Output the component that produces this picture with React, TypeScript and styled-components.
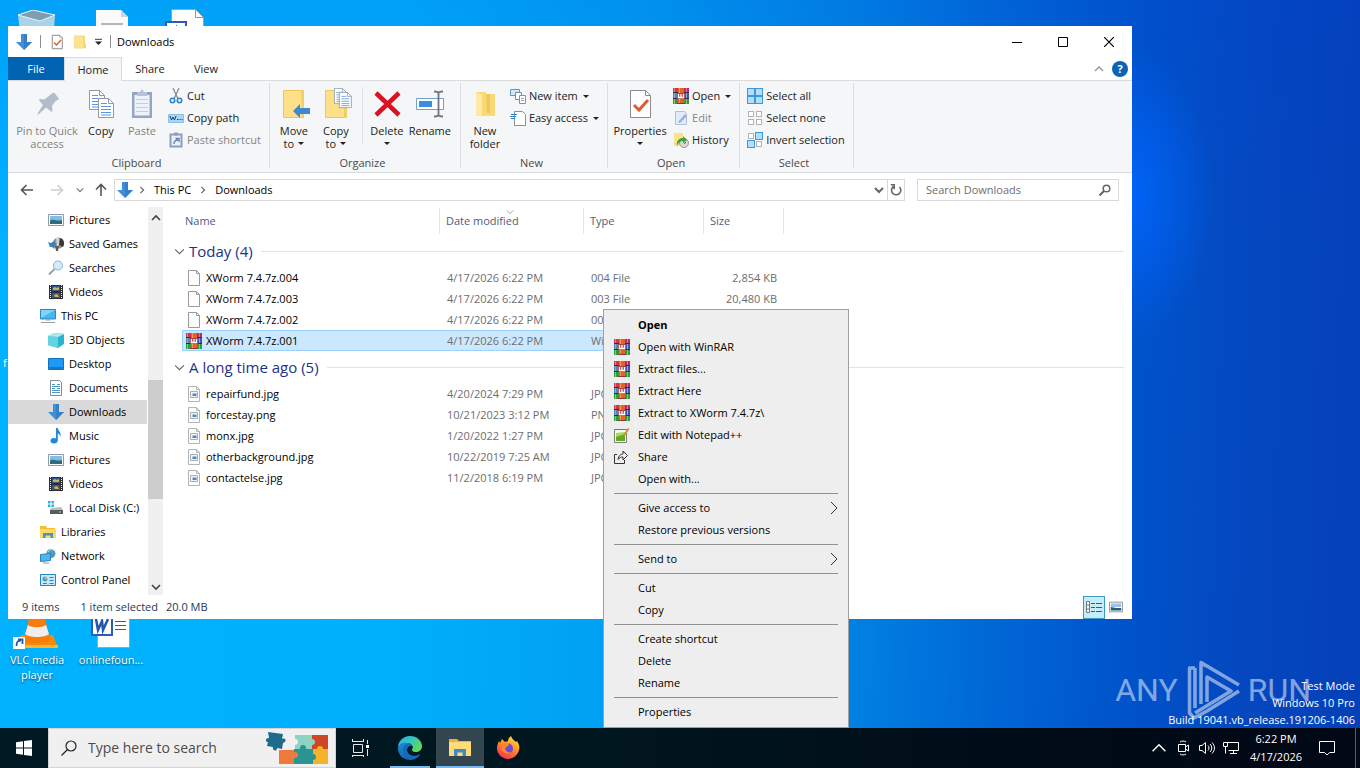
import React from 'react';
import styled, { createGlobalStyle, css } from 'styled-components';

const Global = createGlobalStyle`
  *, *::before, *::after { box-sizing: border-box; }
  body { margin: 0; overflow: hidden; }
  body, button, input, table { font-family: "Open Sans", "Noto Sans", sans-serif; font-size: 11px; line-height: 16px; }
  button { border: 0; padding: 0; margin: 0; background: none; color: inherit; cursor: default; }
  svg { display: block; flex: none; }
`;

/* ---------- Icons ---------- */

type IconProps = { size?: number };

const Svg = ({ s = 16, box = 16, children }: { s?: number; box?: number; children: React.ReactNode }) => (
  <svg width={s} height={s} viewBox={`0 0 ${box} ${box}`} fill="none" aria-hidden="true">{children}</svg>
);

const RarIcon = () => (
  <Svg>
    <path d="M0 0h16v5H0z" fill="#c93a4c" /><path d="M10 0h6v5h-6z" fill="#b02f63" />
    <path d="M0 5h16v6H0z" fill="#4b4fae" /><path d="M0 5h6v6H0z" fill="#4f86b8" />
    <path d="M0 11h16v5H0z" fill="#2f9a3e" />
    <path d="M0 4h16v1H0zM0 10h16v1H0z" fill="#4a2038" />
    <path d="M1 0h1v4H1zM13 0h1v4h-1z" fill="#eb7686" />
    <path d="M1 5h1v5H1zM13 5h1v5h-1z" fill="#8ba6dc" />
    <path d="M1 11h1v5H1zM13 11h1v5h-1z" fill="#7acb7a" />
    <path d="M5 0h6v16H5z" fill="#e3622b" /><path d="M6 0h1v16H6z" fill="#f39a50" />
    <path d="M4 5h8v6H4z" fill="#a94446" /><path d="M5.500 6v3.500h5V6M8 6v3" stroke="#fff" strokeWidth="1.300" />
    <path d="M4 15h8v1H4z" fill="#93362a" />
  </Svg>
);

const DownIcon = ({ size = 16 }: IconProps) => (
  <Svg s={size}><path d="M5 0h6v8h5l-8 8-8-8h5z" fill="#3f8fd9" /><path d="M8 0h3v8h5l-8 8z" fill="#3580c8" /></Svg>
);

const Folder = ({ size = 16 }: IconProps) => (
  <Svg s={size} box={32}>
    <path d="M3 2h22v28H3z" fill="#ffe490" stroke="#e9c55e" /><path d="M25 20h4v10h-4z" fill="#f0c750" /><path d="M23 2h4v28h-2z" fill="#f7d26b" />
  </Svg>
);

const CheckPage = ({ size = 32 }: IconProps) => (
  <Svg s={size} box={32}>
    <path d="M6.500 2.500h15l5 5v22h-20z" fill="#fff" stroke="#8c8c8c" strokeWidth={size < 20 ? 2 : 1} /><path d="M21.500 2.500v5h5" stroke="#8c8c8c" />
    <path d="M10 17l5 5 9-10" stroke="#de5f2e" strokeWidth="3" />
  </Svg>
);

const PinIcon = () => (
  <Svg s={32} box={32}><path d="M16.500 9l5-4c.500-.500 1.500-.500 2 0l4 5c.500.500.500 1.500-.500 2l-2 .500-4 5.500.500 4.500c0 1-1 1.500-1.800.800L15 19.500 8 26l-1.500.800.300-1.800L12 17 8.500 13c-.800-.800-.300-2 .800-2l4.200.500z" fill="#b3bccb" /></Svg>
);

const Sheet = ({ x, y }: { x: number; y: number }) => (
  <g transform={`translate(${x} ${y})`}>
    <path d="M.500.500h10l5 5v14H.500z" fill="#fff" stroke="#8d98a8" /><path d="M10.500.500v5h5" stroke="#8d98a8" />
    <path d="M3 5.500h6M3 8.500h10M3 11.500h10M3 14.500h10M3 17h10" stroke="#5c96dd" />
  </g>
);

const CopyIcon = () => <Svg s={32} box={32}><Sheet x={4} y={2} /><Sheet x={13} y={10} /></Svg>;

const PasteIcon = () => (
  <Svg s={32} box={32}>
    <path d="M6 4h20v26H6z" fill="#96a5c4" /><path d="M8.500 7h15v20.500h-15z" fill="#eef2fa" />
    <path d="M11 4h3l2-3 2 3h3v4H11z" fill="#b7c2d8" /><path d="M10 11.500h12M10 15.500h12M10 19.500h12M10 23.500h12" stroke="#c3cee2" />
  </Svg>
);

const CutIcon = () => (
  <Svg><path d="M5 0l5 11M11 0L6 11" stroke="#7b8796" strokeWidth="1.200" /><circle cx="4.500" cy="12.500" r="2.200" stroke="#2d86c6" strokeWidth="1.600" /><circle cx="11.500" cy="12.500" r="2.200" stroke="#2d86c6" strokeWidth="1.600" /></Svg>
);

const PathIcon = () => (
  <Svg><path d="M.500 4.500h15v8H.500z" fill="#a9d6f5" stroke="#8ac0e6" /><path d="M2 6l1.500 4L5 7l1.500 3L8 6M9 9.500h1.500M11.500 9.500h1M13.500 9.500h1" stroke="#1c3f66" /></Svg>
);

const PasteShortcutIcon = () => (
  <Svg><path d="M2.500 2.500h11v12h-11z" fill="#eaf0fa" stroke="#8d9dbf" strokeWidth="2" /><path d="M6 .500h4v3H6z" fill="#8d9dbf" /><path d="M6 12c0-3 1-4 4-4M7.500 6.500h3.500V10" stroke="#6680b4" strokeWidth="1.400" /></Svg>
);

const MoveToIcon = () => (
  <Svg s={32} box={32}><path d="M5.500 2.500h19v27h-19z" fill="#ffe08a" stroke="#ecc65d" /><path d="M23 2h3v28h-2z" fill="#f3cd66" /><path d="M15 23l7-7v4h10v6H22v4z" fill="#3d8ad2" /></Svg>
);

const CopyToIcon = () => (
  <Svg s={32} box={32}><path d="M5.500 2.500h19v27h-19z" fill="#ffe08a" stroke="#ecc65d" /><path d="M24 19h3v11h-3z" fill="#f3cd66" />
    <g transform="translate(14 0) scale(.8)"><Sheet x={0} y={0} /></g><g transform="translate(19 4) scale(.8)"><Sheet x={0} y={0} /></g></Svg>
);

const DeleteIcon = () => <Svg s={32} box={32}><path d="M5 5l23 22M28 5L5 27" stroke="#d81324" strokeWidth="4.500" /></Svg>;

const RenameIcon = () => (
  <Svg s={32} box={32}><path d="M2.500 10.500h27v11h-27z" fill="#fff" stroke="#6aa2d4" /><path d="M5 13h13v6H5z" fill="#3b8de0" /><path d="M20 3.500c3 0 4.500.500 4.500 2v21c0 1.500-1.500 2-4.500 2M29 3.500c-3 0-4.500.500-4.500 2v21c0 1.500 1.500 2 4.500 2" stroke="#6d7680" strokeWidth="1.800" /></Svg>
);

const NewFolderIcon = () => (
  <Svg s={32} box={32}><path d="M7 4h10v2h9v22H7z" fill="#f9d876" /><path d="M7 4l6 3v22l-6-2z" fill="#ffe9a8" /><path d="M17 6h4v19h-3z" fill="#f2c75a" /></Svg>
);

const NewItemIcon = () => (
  <Svg><path d="M.500 1.500h9v6h-9z" fill="#cfe9f9" stroke="#5d9cb9" /><path d="M5.500 4.500h6v7h-6z" fill="#fff" stroke="#6f8ea8" /><path d="M9.500 7.500h6v8h-6z" fill="#fff" stroke="#8d9096" /><path d="M11 10.500h3M11 12.500h3" stroke="#8ba9c8" /></Svg>
);

const EasyAccessIcon = () => (
  <Svg><path d="M4.500 1.500h8l3 3v11h-11z" fill="#fff" stroke="#8d9096" /><path d="M1 4.500h6M0 6.500h6M1 8.500h4" stroke="#2b83cf" /></Svg>
);

const EditIcon = () => (
  <Svg><path d="M2.500 1.500h9l2 2v11h-11z" fill="#e2ebfa" stroke="#b1bfdb" /><path d="M5 12l7-8 2 2-7 7z" fill="#9db1d8" /></Svg>
);

const HistoryIcon = () => (
  <Svg><path d="M1 1h9v13H1z" fill="#ffe08a" /><circle cx="11" cy="11" r="4.500" fill="#d7d7d7" stroke="#9a9a9a" /><path d="M4 14c-1-5 2-8 6-8V4l4 4-4 3V9c-3 0-5 2-6 5z" fill="#41a336" /><path d="M11 12l2-2" stroke="#555" /></Svg>
);

const Squares = ({ on }: { on: boolean[] }) => (
  <Svg>{on.map((f, i) => <rect key={i} x={(i % 2) * 8 + (f ? .5 : 1.5)} y={Math.floor(i / 2) * 8 + (f ? .5 : 1.5)} width={f ? 7 : 5} height={f ? 7 : 5} fill={f ? '#b5defb' : '#fff'} stroke={f ? '#3f97dd' : '#b3b3b3'} />)}</Svg>
);

const PictureIcon = () => (
  <Svg><path d="M.500 2.500h15v11H.500z" fill="#fff" stroke="#8f9ba6" /><path d="M2 4h12v5H2z" fill="#7fbdf0" /><path d="M2 9c3-3 6 1 12-1v4H2z" fill="#2f6e74" /></Svg>
);
const GamesIcon = () => (
  <Svg><circle cx="10.500" cy="7" r="5.500" fill="#8c9499" /><path d="M8 2l3 0 1 6-3 3z" fill="#cfd3d6" /><path d="M12 2c4 1 5 6 3 9l-4-2z" fill="#3a3635" /><path d="M0 6l3 1 3-2 2 3-2 5-2-2-2 0z" fill="#3f83b5" /><path d="M7 10h4l-1 5H8z" fill="#635954" /></Svg>
);
const SearchesIcon = () => (
  <Svg><circle cx="10" cy="5.500" r="4.500" fill="#d3ebfa" stroke="#8ab2cf" /><path d="M6.500 9L1 14.500" stroke="#9aa0a5" strokeWidth="2" /></Svg>
);
const VideoIcon = () => (
  <Svg><path d="M1 1h14v14H1z" fill="#2e2e35" /><path d="M2.500 1v14M13.500 1v14" stroke="#e7e7e7" strokeDasharray="1 1" /><path d="M4 2h8v5H4z" fill="#33598e" /><path d="M4 9h8v5H4z" fill="#3b5588" /><path d="M5 4l2-1 2 1 2-1v3H5zM6 11l3-1 2 3H7z" fill="#cfae53" /></Svg>
);
const PcIcon = () => (
  <Svg><path d="M.500 1.500h15v9.500H.500z" fill="#45b6f0" stroke="#3387b5" /><path d="M1 2h14L1 10z" fill="#7dd4fa" /><path d="M6 12h4M1 14.500h14" stroke="#92a0aa" /></Svg>
);
const CubeIcon = () => (
  <Svg><path d="M0 4l6-3 10 1v10l-6 4L0 13z" fill="#2bb5cd" /><path d="M0 4l10 1v11L0 13z" fill="#63d3e3" /><path d="M0 4l6-3 10 1-6 3z" fill="#a6ecf3" /></Svg>
);
const DesktopIcon = () => (
  <Svg><path d="M.500 2.500h15v11H.500z" fill="#1c9af5" stroke="#1471bd" /><path d="M1 12h14" stroke="#0d5ca3" /></Svg>
);
const DocIcon = () => (
  <Svg><path d="M2.500.500h9l2 2v13h-11z" fill="#fff" stroke="#84909b" /><path d="M4 4.500h3M9 4.500h3M4 6.500h8M4 8.500h3M9 8.500h3M4 10.500h8M4 12.500h8" stroke="#4d95c4" /></Svg>
);
const MusicIcon = () => (
  <Svg><ellipse cx="6" cy="12.800" rx="3.500" ry="2.700" fill="#1e88dd" /><path d="M8 0h1.800c0 3 4.200 4 2.400 9-.200-2.500-1.200-3.300-2.400-3.500v7.500H8z" fill="#1e88dd" /></Svg>
);
const DiskIcon = () => (
  <Svg><path d="M0 1h2.500v2.500H0zM3.500 1H6v2.500H3.500zM0 4.500h2.500V7H0zM3.500 4.500H6V7H3.500z" fill="#2eb1df" /><path d="M3 8l10-1 2 3H2z" fill="#b9bec2" /><path d="M2 10h13v4H2z" fill="#555b5f" /><path d="M11 12h2" stroke="#7ee07a" /></Svg>
);
const LibraryIcon = () => (
  <Svg><path d="M0 2h6l1 2h8v10H0z" fill="#f6bd31" /><path d="M0 5h16v9H0z" fill="#ffd965" /><path d="M3 14V9h10v5h-2.500v-2.500h-5V14z" fill="#4293cf" /></Svg>
);
const NetworkIcon = () => (
  <Svg><circle cx="11" cy="5.500" r="4.500" fill="#5699bd" /><path d="M8 4c2-3 5-3 6-1" stroke="#bde2f1" /><path d="M.500 6.500l10-1v7l-10 1z" fill="#4cb7ee" stroke="#2c83bb" /><path d="M3 15h6" stroke="#8d9ba5" /></Svg>
);
const ControlIcon = () => (
  <Svg><path d="M.500 2.500h15v11H.500z" fill="#c4eafa" stroke="#2785ba" /><circle cx="5" cy="7" r="2.500" fill="#3f9fda" /><path d="M5 7V4.500A2.500 2.500 0 017.500 7z" fill="#f0b33c" /><path d="M9.500 5.500h4M9.500 8.500h4M3 11.500h4M9.500 11.500h4" stroke="#2785ba" /></Svg>
);
const PageIcon = () => (
  <Svg><path d="M2.500.500h8l3 3v12h-11z" fill="#fdfdfd" stroke="#9a9a9a" /><path d="M10.500.500v3h3" stroke="#9a9a9a" /></Svg>
);
const ImagePageIcon = () => (
  <Svg><path d="M2.500.500h8l3 3v12h-11z" fill="#fdfdfd" stroke="#b4b4b4" /><path d="M10.500.500v3h3" stroke="#b4b4b4" /><path d="M4.500 5.500h7v6h-7z" fill="#eef5fa" stroke="#9fb0be" /><path d="M6.500 7.500h4v2.500h-4z" fill="#5c86a8" /></Svg>
);
const NppIcon = () => (
  <Svg><path d="M.500 2.500h12v13H.500z" fill="#f5f9ee" stroke="#7d8277" /><path d="M2 6l9-1v9H2z" fill="#a8d95b" /><path d="M2 10l9-3v7H2z" fill="#62a825" /><path d="M1 2.500h11" stroke="#666" strokeDasharray="1 1" /><path d="M9 8l5-7 1.500 1L11 9z" fill="#d5903a" /></Svg>
);
const ShareIcon = () => (
  <Svg><path d="M3 5.500H.500v9h10V11" stroke="#333" /><path d="M4 10.500C4.500 6.500 7 5 9 5V2L13.500 6.500 9 11V8C7 8 5.500 8.500 4 10.500z" stroke="#333" strokeLinejoin="round" /></Svg>
);

const Chevron = ({ dir, w = 8, color = '#666', bold = 1.5 }: { dir: 'up' | 'down' | 'right'; w?: number; color?: string; bold?: number }) => {
  const d = { up: 'M1 7l4-4 4 4', down: 'M1 3l4 4 4-4', right: 'M3 1l4 4-4 4' }[dir];
  return <svg width={w} height={w} viewBox="0 0 10 10" fill="none" aria-hidden="true"><path d={d} stroke={color} strokeWidth={bold} /></svg>;
};

const SubmenuMark = () => (
  <Svg><path d="M5 2l6 6-6 6" stroke="#333" /></Svg>
);

const Arrow = ({ deg, color }: { deg: number; color: string }) => (
  <Svg><path transform={`rotate(${deg} 8 8)`} d="M14 8H3M7.500 3L2.500 8l5 5" stroke={color} strokeWidth="1.600" /></Svg>
);

const Caret = () => <svg width="6" height="3" viewBox="0 0 6 3" aria-hidden="true"><path d="M0 0h6L3 3z" fill="#222" /></svg>;

/* ---------- Desktop ---------- */

const Screen = styled.div`
  min-height: 100vh; display: flex; flex-direction: column;
`;
const Desktop = styled.main`
  position: relative; flex: 1; overflow: hidden;
  background:
    radial-gradient(ellipse 90px 150px at 1125px 195px, rgba(0, 102, 255, .9), rgba(0, 90, 235, 0)),
    linear-gradient(180deg, rgba(0, 60, 215, .14) 0, rgba(0, 60, 205, 0) 35%),
    linear-gradient(92deg, #00b2ff 0, #00b0fc 30%, #00a0f2 46%, #0084e4 62%, #0068d6 73%, #0053ca 83%, #0448c0 91%, #0440b8 100%);
`;
const DesktopIconBox = styled.div<{ $x: number; $y: number }>`
  position: absolute; left: ${p => p.$x}px; top: ${p => p.$y}px; width: 74px;
  display: flex; flex-direction: column; align-items: center; gap: 3px;
  color: #fff; text-align: center; line-height: 15px; text-shadow: 0 1px 2px rgba(0, 0, 0, .6);
`;
const ClippedLabel = styled.span`
  position: absolute; left: 3px; top: 355px; color: #fff;
`;
const Watermark = styled.div`
  position: absolute; right: 49px; bottom: 8px; display: flex; align-items: center; gap: 7px;
  color: #fff; opacity: .5; font-family: Roboto, "Liberation Sans", sans-serif; font-size: 32px; line-height: 60px;
`;
const BuildInfo = styled.div`
  position: absolute; right: 5px; bottom: 0; color: #fff; text-align: right; line-height: 17px;
`;

const BinArt = () => (
  <svg width="44" height="48" viewBox="0 0 44 48" aria-hidden="true"><path d="M3 5l15-5 22 5-3 43H8z" fill="#c8dce5" fillOpacity=".85" /><path d="M3 5l15-5 22 5-15 6z" fill="#7c9eb0" stroke="#e9f3f6" /></svg>
);
const TextArt = () => (
  <svg width="34" height="48" viewBox="0 0 34 48" aria-hidden="true"><path d="M1 0h25l7 7v41H1z" fill="#fafafa" /><path d="M26 0v7h7z" fill="#cdd5d9" /><path d="M6 14h22" stroke="#777" /></svg>
);
const WordArt = () => (
  <svg width="40" height="48" viewBox="0 0 40 48" fill="none" aria-hidden="true">
    <path d="M6.500.500h24l8 8v38h-32z" fill="#fff" stroke="#9aa5b0" /><path d="M30.500.500v8h8" stroke="#d57f60" />
    <path d="M1 13h20v21H1z" fill="#fff" stroke="#2b5cb8" strokeWidth="2" /><path d="M5 18l2 11 4-9 1 9 5-11" stroke="#2456b0" strokeWidth="2.500" />
    <path d="M24 20.500h11M24 24.500h11M24 28.500h11" stroke="#2b5cb8" />
  </svg>
);
const VlcArt = () => (
  <svg width="48" height="48" viewBox="0 0 48 48" fill="none" aria-hidden="true">
    <path d="M8 34h32l5 13H3z" fill="#f48a0c" /><path d="M3 44h42v3H3z" fill="#ffb32e" />
    <path d="M19 4h10l8 35c-4 4-22 4-26 0z" fill="#f97b0b" /><path d="M15 24c4 3 14 3 18 0l3 9c-4 4-20 4-24 0z" fill="#eee" />
    <path d="M0 36h12v12H0z" fill="#fff" /><path d="M3.500 45c0-4 1-5.500 4.500-5.500M5 38.500h4.500V43" stroke="#2459a9" strokeWidth="1.800" />
  </svg>
);
const PlayLogo = () => (
  <svg width="56" height="60" viewBox="0 0 56 60" fill="none" aria-hidden="true">
    <path d="M10 8H4.500V53L9 58l13-7M16 44V2.500L54 25M10 8v40M22 42V17l24 14L10 53M16 2.500l5 3.500M54 31L22 51" stroke="#fff" strokeWidth="3.500" strokeLinejoin="round" />
  </svg>
);

/* ---------- Explorer window ---------- */

const Window = styled.section`
  position: absolute; left: 8px; right: 228px; top: 26px; bottom: 109px;
  background: #fff; color: #222; display: flex; flex-direction: column;
`;
const TitleBar = styled.header`
  display: flex; align-items: center; height: 31px; padding-left: 8px; color: #000;
`;
const QuickTools = styled.div`
  display: flex; align-items: center; gap: 8px; padding-right: 6px;
`;
const Bar = styled.i`
  width: 1px; height: 13px; background: #8d8d8d;
`;
const Caption = styled.h1`
  flex: 1; margin: 0; font-size: 11px; font-weight: 400;
`;
const CaptionButton = styled.button`
  width: 46px; height: 31px; display: grid; place-items: center;
`;
const TabRow = styled.nav`
  display: flex; height: 24px; border-bottom: 1px solid #dadbdc;
`;
const Tab = styled.button<{ $kind?: 'file' | 'active' }>`
  width: 56px; height: 23px;
  ${p => p.$kind === 'file' && css`background: #0063b1; color: #fff;`}
  ${p => p.$kind === 'active' && css`width: 58px; height: 24px; background: #f5f6f7; border: 1px solid #dadbdc; border-bottom: 0;`}
`;
const TabEnd = styled.div`
  margin-left: auto; padding-right: 4px; display: flex; align-items: center; gap: 8px;
`;
const Help = styled.button`
  width: 16px; height: 16px; border-radius: 50%; background: #0a63b5; color: #fff; font-weight: 700;
`;
const Ribbon = styled.div`
  display: flex; height: 92px; padding: 2px 0 4px; background: #f5f6f7; border-bottom: 1px solid #dadbdc;
`;
const Group = styled.section<{ $pad: number }>`
  display: flex; flex-direction: column; padding: 2px 8px 0 ${p => p.$pad}px; border-right: 1px solid #dddee0;
`;
const GroupBody = styled.div`
  flex: none; display: flex; height: 70px;
`;
const GroupName = styled.h2`
  margin: 0; text-align: center; font-size: 11px; font-weight: 400; color: #4a4a4a;
`;
const BigButton = styled.button<{ $w: number }>`
  width: ${p => p.$w}px; padding-top: 3px; display: flex; flex-direction: column; align-items: center; gap: 4px; line-height: 13px; white-space: nowrap;
  &:disabled { color: #828282; }
`;
const BigLabel = styled.span`
  display: flex; flex-direction: column; align-items: center;
`;
const CaretLine = styled.span`
  display: flex; align-items: center; gap: 4px; height: 13px;
`;
const SmallColumn = styled.div`
  display: flex; flex-direction: column; padding-left: 4px;
`;
const SmallButton = styled.button`
  height: 22px; display: flex; align-items: center; gap: 3px; white-space: nowrap;
  &:disabled { color: #858585; }
  svg:nth-of-type(2) { margin-left: 2px; }
`;
const Split = styled.i`
  width: 1px; height: 58px; margin: 2px 3px 0 5px; background: #e0e1e2;
`;

const AddressRow = styled.div`
  display: flex; align-items: center; height: 34px; padding: 0 13px 0 11px;
`;
const NavButtons = styled.div`
  display: flex; align-items: center; gap: 14px; padding-right: 5px;
`;
const RecentButton = styled.button`
  margin: 0 -5px 0 -3px;
`;
const AddressBox = styled.div`
  flex: 1; display: flex; align-items: center; height: 22px; padding-left: 2px; border: 1px solid #d9d9d9; color: #000;
`;
const Crumbs = styled.div`
  flex: 1; display: flex; align-items: center; gap: 8px; padding-left: 5px;
`;
const AddressButton = styled.button<{ $line?: boolean }>`
  width: 17px; height: 20px; display: grid; place-items: center;
  ${p => p.$line && css`border-left: 1px solid #d9d9d9;`}
`;
const SearchBox = styled.label`
  display: flex; align-items: center; width: 202px; height: 22px; margin-left: 12px; padding: 0 7px 0 8px; border: 1px solid #d9d9d9;
  input { flex: 1; min-width: 0; border: 0; padding: 0; outline: 0; background: none; }
  input::placeholder { color: #6d6d6d; opacity: 1; }
`;

const Body = styled.div`
  flex: 1; min-height: 0; display: flex;
`;
const Tree = styled.nav`
  width: 139px; padding-top: 1px; overflow: hidden; color: #000;
`;
const TreeItem = styled.button<{ $root?: boolean; $on?: boolean }>`
  width: 100%; height: 24px; display: flex; align-items: center; gap: 5px; white-space: nowrap;
  padding-left: ${p => p.$root ? 32 : 40}px; background: ${p => p.$on ? '#d9d9d9' : 'none'};
`;
const Scroll = styled.div`
  width: 17px; padding: 3px 0 1px; background: #f0f0f0; border-left: 1px solid #fff; border-right: 1px solid #fff;
  display: flex; flex-direction: column; align-items: center; justify-content: space-between;
`;
const Thumb = styled.i`
  width: 15px; height: 119px; margin-top: 75px; background: #cdcdcd;
`;
const ScrollButton = styled.button`
  width: 15px; height: 15px; display: grid; place-items: center;
`;
const Files = styled.table`
  flex: 1; width: 100%; align-self: flex-start; margin: 1px 8px 0 10px; table-layout: fixed; border-collapse: separate; border-spacing: 0;
`;
const HeadCell = styled.th`
  position: relative; height: 26px; padding: 0 0 0 6px; text-align: left; font-weight: 400; color: #4c607a; border-right: 1px solid #e5e5e5;
  &:first-child, &:last-child { border-right: 0; }
  &:nth-child(2) { padding-left: 3px; }
`;
const SortMark = styled.span`
  position: absolute; left: 66px; top: 0;
`;
const GroupHead = styled.th`
  height: 31px; padding: 0 0 1px; text-align: left; font-weight: 400;
`;
const GroupToggle = styled.button`
  width: 100%; display: flex; align-items: center; gap: 4px; color: #1e3287; font-size: 15px; line-height: 20px; white-space: nowrap;
  &::after { content: ''; flex: 1; height: 1px; margin-left: 4px; background: #e2e2e2; }
`;
const Spacer = styled.tr<{ $h: number }>`
  height: ${p => p.$h}px; td { padding: 0; }
`;
const Row = styled.tr<{ $on?: boolean }>`
  height: 21px; color: #6d6d6d;
  td { padding: 0 7px; white-space: nowrap; overflow: hidden; }
  td:nth-child(2) { color: #000; padding-left: 4px; }
  td:nth-child(5) { text-align: right; }
  ${p => p.$on && css`
    td:nth-child(n+2):nth-child(-n+5) { background: #cce8ff; box-shadow: inset 0 1px #99d1ff, inset 0 -1px #99d1ff; }
    td:nth-child(2) { border-left: 1px solid #99d1ff; padding-left: 3px; }
  `}
`;
const FileName = styled.span`
  display: flex; align-items: center; gap: 4px;
`;
const StatusBar = styled.footer`
  display: flex; align-items: center; height: 24px; padding: 0 5px 0 14px; color: #1e395b;
  span { margin-right: 21px; } span + span { margin-right: 8px; }
`;
const ViewButtons = styled.div`
  margin-left: auto; display: flex; align-items: center;
`;
const ViewButton = styled.button<{ $on?: boolean }>`
  width: 22px; height: 23px; display: grid; place-items: center;
  ${p => p.$on && css`background: #c4ecfb; border: 1px solid #3a9bc4;`}
`;

/* ---------- Context menu ---------- */

const Menu = styled.div`
  position: absolute; left: 603px; top: 309px; width: 246px; padding: 4px 0; background: #eee; border: 1px solid #a0a0a0; color: #000;
  hr { height: 1px; margin: 3px 10px; border: 0; background: #919191; }
`;
const MenuItem = styled.button<{ $bold?: boolean }>`
  width: 100%; height: 22px; padding: 0 6px 0 10px; display: grid; grid-template-columns: 24px 1fr auto; align-items: center; text-align: left;
  font-weight: ${p => p.$bold ? 700 : 400};
`;

/* ---------- Taskbar ---------- */

const Taskbar = styled.footer`
  display: flex; height: 40px; color: #fff; background: linear-gradient(90deg, #001a24 0, #00161f 45%, #000c18 75%, #020816 100%);
`;
const TaskButton = styled.button<{ $open?: boolean; $active?: boolean }>`
  width: 48px; height: 40px; display: grid; place-items: center; margin-right: 2px; position: relative;
  background: ${p => p.$active ? '#33464f' : 'none'};
  ${p => p.$open && css`&::after { content: ''; position: absolute; height: 2px; bottom: 0; left: ${p.$active ? 0 : 4}px; right: ${p.$active ? 0 : 4}px; background: #76b9ed; }`}
  ${p => p.$active && css`margin-right: 0;`}
`;
const StartButton = styled.button`
  width: 48px; height: 40px; display: grid; place-items: center;
`;
const TaskSearch = styled.label`
  display: flex; align-items: center; gap: 11px; width: 288px; padding: 0 5px 0 12px; background: #f0f0f0; border: 1px solid #d4d4d4;
  input { flex: 1; min-width: 0; padding: 0; border: 0; outline: 0; background: none; font-size: 14px; line-height: 20px; }
  input::placeholder { color: #4c4c4c; opacity: 1; }
`;
const Tray = styled.div`
  margin-left: auto; display: flex; align-items: center; gap: 8px;
`;
const Clock = styled.button`
  width: 58px; text-align: center; line-height: 18px; white-space: nowrap;
`;
const Notices = styled.button`
  margin: 0 12px 0 6px;
`;
const ShowDesktop = styled.button`
  width: 5px; height: 40px; border-left: 1px solid #596068;
`;

const WindowsLogo = () => <Svg><path d="M0 2.300l7-1v6.200H0zM8 1.100L16 0v7.500H8zM0 8.500h7v6.200l-7-1zM8 8.500h8V16l-8-1.100z" fill="#fff" /></Svg>;
const Puzzle = () => (
  <svg width="64" height="36" viewBox="0 0 64 36" aria-hidden="true">
    <path d="M2 2l15 2-1 5c4-2 5 3 1 4l-1 6-5-1c0 4-5 3-4-1l-6-1 1-4c-3 0-3-4 1-4z" fill="#1d6c8c" />
    <path d="M13 20h15v14H13z" fill="#ee7b3c" /><path d="M29 5h17v14H29z" fill="#8dd3c2" /><path d="M46 5h16v14H46z" fill="#cf4724" />
    <path d="M28 19h19v15H28z" fill="#2b9393" /><path d="M47 19h15v15H47z" fill="#f4b32b" />
    <circle cx="46" cy="12" r="3" fill="#8dd3c2" /><circle cx="29" cy="25" r="3" fill="#ee7b3c" /><circle cx="37" cy="18" r="3" fill="#2b9393" /><circle cx="54" cy="19" r="3" fill="#f4b32b" /><circle cx="47" cy="27" r="3" fill="#2b9393" /><circle cx="29" cy="12" r="3" fill="#f0f0f0" />
  </svg>
);
const TaskViewIcon = () => (
  <Svg s={18} box={18}><path d="M2.500 5.500h9v8h-9zM1 2.500h12M1 16.500h12M1.500 0v3M12.500 0v3M1.500 16v2M12.500 16v2M16.500 1v4M16.500 10v7" stroke="#e8e8e8" /><path d="M15 6h3v3h-3z" fill="#fff" /></Svg>
);
const EdgeIcon = () => (
  <svg width="24" height="24" viewBox="0 0 24 24" fill="none" aria-hidden="true">
    <defs>
      <linearGradient id="edgeTop" x1="0" y1="0" x2="1" y2=".6"><stop stopColor="#28a9e8" /><stop offset=".5" stopColor="#35c6c0" /><stop offset="1" stopColor="#62d957" /></linearGradient>
      <linearGradient id="edgeLow" x1="0" y1="0" x2="1" y2="1"><stop stopColor="#1c8fdc" /><stop offset="1" stopColor="#0f4f9c" /></linearGradient>
    </defs>
    <path d="M0 12C0 5 5 0 12 0c7 0 12 5 12 10 0 4-3 6-6 6-3 0-5-1-4-3 2-3-1-6-5-6-5 0-8 2-9 5z" fill="url(#edgeTop)" />
    <path d="M0 12c1-4 5-6 9-5 2 0 4 1 5 3-3-1-5 1-5 4 0 4 4 6 8 6 2 0 4-1 5-2-2 4-6 6-10 6C5 24 0 19 0 12z" fill="url(#edgeLow)" />
    <path d="M9 8c-4 2-5 6-3 10 2 3 5 5 9 5 3-.500 6-2 7-5-6 4-13 1-13-4 0-3 2-4 4-4-1-1-2-2-4-2z" fill="#1669bd" />
    <path d="M14 10c-3 0-4 3-2.500 5.500C13 18 17 18.500 20 17c-3 0-6-1-6-3 0-1 1-2 0-4z" fill="#04202e" />
  </svg>
);
const ExplorerIcon = () => (
  <svg width="24" height="24" viewBox="0 0 24 24" aria-hidden="true"><path d="M1 3h8l2 2h12v15H1z" fill="#f2b03a" /><path d="M1 6h22v14H1z" fill="#ffdc78" /><path d="M6 20v-7h12v7h-3.500v-3.500h-5V20z" fill="#3f8dc8" /></svg>
);
const FirefoxIcon = () => (
  <svg width="24" height="24" viewBox="0 0 24 24" aria-hidden="true">
    <defs><linearGradient id="fox" x1=".8" y1="0" x2=".3" y2="1"><stop stopColor="#ffe53f" /><stop offset=".45" stopColor="#ff9325" /><stop offset="1" stopColor="#f72f56" /></linearGradient></defs>
    <path d="M1 12c0-3 1-5 2-7l1 2 2-4 3 3 3-1c0-3 2-4 3-5 1 3 3 4 5 6l1-1c2 3 3 6 2 9-1 5-6 9-11 9S1 19 1 12z" fill="url(#fox)" />
    <circle cx="12" cy="12.500" r="5" fill="#6b4bd0" /><path d="M7 9l5-2 1 2-4 3c0 3 3 5 6 4-3 3-9 1-9-3z" fill="#ff8a2b" />
  </svg>
);
const CamIcon = () => <Svg><path d="M3.500 4.500h7v7h-7zM10.500 7l3-2v6l-3-2M5 2c2-1.300 4-1.300 6 0M5 14c2 1.300 4 1.300 6 0" stroke="#fff" /></Svg>;
const VolumeIcon = () => <Svg><path d="M.500 5.500H3l3.500-3v11l-3.500-3H.500zM9 5.500c1.300 1.500 1.300 3.500 0 5M11 4c2.300 2.500 2.300 5.500 0 8M13 2.500c3.300 3.500 3.300 7.500 0 11" stroke="#fff" /></Svg>;
const NetIcon = () => <Svg><path d="M4.500 4.500V2.500h11v8h-10M.500 2.500h4v4h-4zM2.500 6.500v7M10.500 10.500v3M7 13.500h7" stroke="#fff" /></Svg>;

/* ---------- Data ---------- */

const tree: { name: string; icon: React.ReactNode; root?: boolean; on?: boolean }[] = [
  { name: 'Pictures', icon: <PictureIcon /> },
  { name: 'Saved Games', icon: <GamesIcon /> },
  { name: 'Searches', icon: <SearchesIcon /> },
  { name: 'Videos', icon: <VideoIcon /> },
  { name: 'This PC', icon: <PcIcon />, root: true },
  { name: '3D Objects', icon: <CubeIcon /> },
  { name: 'Desktop', icon: <DesktopIcon /> },
  { name: 'Documents', icon: <DocIcon /> },
  { name: 'Downloads', icon: <DownIcon />, on: true },
  { name: 'Music', icon: <MusicIcon /> },
  { name: 'Pictures', icon: <PictureIcon /> },
  { name: 'Videos', icon: <VideoIcon /> },
  { name: 'Local Disk (C:)', icon: <DiskIcon /> },
  { name: 'Libraries', icon: <LibraryIcon />, root: true },
  { name: 'Network', icon: <NetworkIcon />, root: true },
  { name: 'Control Panel', icon: <ControlIcon />, root: true },
];

type File = [name: string, date: string, type: string, size: string];
const today: File[] = [
  ['XWorm 7.4.7z.004', '4/17/2026 6:22 PM', '004 File', '2,854 KB'],
  ['XWorm 7.4.7z.003', '4/17/2026 6:22 PM', '003 File', '20,480 KB'],
  ['XWorm 7.4.7z.002', '4/17/2026 6:22 PM', '002 File', ''],
  ['XWorm 7.4.7z.001', '4/17/2026 6:22 PM', 'WinRAR', ''],
];
const older: File[] = [
  ['repairfund.jpg', '4/20/2024 7:29 PM', 'JPG File', ''],
  ['forcestay.png', '10/21/2023 3:12 PM', 'PNG File', ''],
  ['monx.jpg', '1/20/2022 1:27 PM', 'JPG File', ''],
  ['otherbackground.jpg', '10/22/2019 7:25 AM', 'JPG File', ''],
  ['contactelse.jpg', '11/2/2018 6:19 PM', 'JPG File', ''],
];

type Entry = { text: string; icon?: React.ReactNode; bold?: boolean; sub?: boolean } | null;
const menu: Entry[] = [
  { text: 'Open', bold: true },
  { text: 'Open with WinRAR', icon: <RarIcon /> },
  { text: 'Extract files...', icon: <RarIcon /> },
  { text: 'Extract Here', icon: <RarIcon /> },
  { text: 'Extract to XWorm 7.4.7z\\', icon: <RarIcon /> },
  { text: 'Edit with Notepad++', icon: <NppIcon /> },
  { text: 'Share', icon: <ShareIcon /> },
  { text: 'Open with...' },
  null,
  { text: 'Give access to', sub: true },
  { text: 'Restore previous versions' },
  null,
  { text: 'Send to', sub: true },
  null,
  { text: 'Cut' },
  { text: 'Copy' },
  null,
  { text: 'Create shortcut' },
  { text: 'Delete' },
  { text: 'Rename' },
  null,
  { text: 'Properties' },
];

/* ---------- Parts ---------- */

const Big = ({ w = 42, icon, lines, caret, disabled }: { w?: number; icon: React.ReactNode; lines: string[]; caret?: boolean; disabled?: boolean }) => (
  <BigButton $w={w} disabled={disabled}>
    {icon}
    <BigLabel>
      <span>{lines[0]}</span>
      {(lines[1] || caret) && <CaretLine>{lines[1]}{caret && <Caret />}</CaretLine>}
    </BigLabel>
  </BigButton>
);

const Small = ({ icon, text, caret, disabled }: { icon: React.ReactNode; text: string; caret?: boolean; disabled?: boolean }) => (
  <SmallButton disabled={disabled}>{icon}{text}{caret && <Caret />}</SmallButton>
);

const FileRow = ({ file, icon, on }: { file: File; icon: React.ReactNode; on?: boolean }) => (
  <Row $on={on}>
    <td />
    <td><FileName>{icon}{file[0]}</FileName></td>
    <td>{file[1]}</td><td>{file[2]}</td><td>{file[3]}</td><td />
  </Row>
);

const Explorer = () => (
  <Window aria-label="Downloads">
    <TitleBar>
      <QuickTools>
        <DownIcon /><Bar /><CheckPage size={16} /><Folder size={14} /><Svg s={7} box={8}><path d="M0 1.500h8" stroke="#222" /><path d="M0 4h8L4 8z" fill="#222" /></Svg><Bar />
      </QuickTools>
      <Caption>Downloads</Caption>
      <CaptionButton aria-label="Minimize"><Svg s={10} box={10}><path d="M0 5.500h10" stroke="#000" /></Svg></CaptionButton>
      <CaptionButton aria-label="Maximize"><Svg s={10} box={10}><path d="M.500.500h9v9h-9z" stroke="#000" /></Svg></CaptionButton>
      <CaptionButton aria-label="Close"><Svg s={10} box={10}><path d="M0 0l10 10M10 0L0 10" stroke="#000" strokeWidth="1.200" /></Svg></CaptionButton>
    </TitleBar>
    <TabRow>
      <Tab $kind="file">File</Tab><Tab $kind="active">Home</Tab><Tab>Share</Tab><Tab>View</Tab>
      <TabEnd><Chevron dir="up" w={10} color="#9a9a9a" /><Help aria-label="Help">?</Help></TabEnd>
    </TabRow>
    <Ribbon>
      <Group $pad={4}>
        <GroupBody>
          <Big w={70} icon={<PinIcon />} lines={['Pin to Quick', 'access']} disabled />
          <Big w={38} icon={<CopyIcon />} lines={['Copy']} />
          <Big w={44} icon={<PasteIcon />} lines={['Paste']} disabled />
          <SmallColumn>
            <Small icon={<CutIcon />} text="Cut" />
            <Small icon={<PathIcon />} text="Copy path" />
            <Small icon={<PasteShortcutIcon />} text="Paste shortcut" disabled />
          </SmallColumn>
        </GroupBody>
        <GroupName>Clipboard</GroupName>
      </Group>
      <Group $pad={3}>
        <GroupBody>
          <Big icon={<MoveToIcon />} lines={['Move', 'to']} caret />
          <Big icon={<CopyToIcon />} lines={['Copy', 'to']} caret />
          <Split />
          <Big icon={<DeleteIcon />} lines={['Delete']} caret />
          <Big w={44} icon={<RenameIcon />} lines={['Rename']} />
        </GroupBody>
        <GroupName>Organize</GroupName>
      </Group>
      <Group $pad={3}>
        <GroupBody>
          <Big icon={<NewFolderIcon />} lines={['New', 'folder']} />
          <SmallColumn>
            <Small icon={<NewItemIcon />} text="New item" caret />
            <Small icon={<EasyAccessIcon />} text="Easy access" caret />
          </SmallColumn>
        </GroupBody>
        <GroupName>New</GroupName>
      </Group>
      <Group $pad={3}>
        <GroupBody>
          <Big w={58} icon={<CheckPage />} lines={['Properties', '']} caret />
          <SmallColumn>
            <Small icon={<RarIcon />} text="Open" caret />
            <Small icon={<EditIcon />} text="Edit" disabled />
            <Small icon={<HistoryIcon />} text="History" />
          </SmallColumn>
        </GroupBody>
        <GroupName>Open</GroupName>
      </Group>
      <Group $pad={3}>
        <GroupBody>
          <SmallColumn>
            <Small icon={<Squares on={[true, true, true, true]} />} text="Select all" />
            <Small icon={<Squares on={[false, false, false, false]} />} text="Select none" />
            <Small icon={<Squares on={[false, true, true, false]} />} text="Invert selection" />
          </SmallColumn>
        </GroupBody>
        <GroupName>Select</GroupName>
      </Group>
    </Ribbon>
    <AddressRow>
      <NavButtons>
        <button aria-label="Back"><Arrow deg={0} color="#555" /></button>
        <button aria-label="Forward"><Arrow deg={180} color="#d0d0d0" /></button>
        <RecentButton aria-label="Recent locations"><Chevron dir="down" color="#777" /></RecentButton>
        <button aria-label="Up"><Arrow deg={90} color="#555" /></button>
      </NavButtons>
      <AddressBox>
        <DownIcon />
        <Crumbs>
          <Chevron dir="right" /><button>This PC</button><Chevron dir="right" /><button>Downloads</button>
        </Crumbs>
        <AddressButton aria-label="Previous locations"><Chevron dir="down" w={10} bold={2} /></AddressButton>
        <AddressButton $line aria-label="Refresh"><Svg s={14}><path d="M12 4.500A5.300 5.300 0 1 1 5 4M2 2h4v5" stroke="#666" strokeWidth="1.800" /></Svg></AddressButton>
      </AddressBox>
      <SearchBox>
        <input placeholder="Search Downloads" aria-label="Search Downloads" />
        <Svg s={12} box={12}><circle cx="7.500" cy="4.500" r="3.300" stroke="#666" strokeWidth="1.500" /><path d="M5 7L.500 11.500" stroke="#666" strokeWidth="2" /></Svg>
      </SearchBox>
    </AddressRow>
    <Body>
      <Tree aria-label="Folders">
        {tree.map((t, i) => <TreeItem key={i} $root={t.root} $on={t.on}>{t.icon}{t.name}</TreeItem>)}
      </Tree>
      <Scroll>
        <ScrollButton aria-label="Scroll up"><Chevron dir="up" w={10} color="#444" bold={1.6} /></ScrollButton>
        <Thumb />
        <ScrollButton aria-label="Scroll down"><Chevron dir="down" w={10} color="#444" bold={1.6} /></ScrollButton>
      </Scroll>
      <Files>
        <colgroup><col width="8" /><col width="258" /><col width="144" /><col width="120" /><col width="80" /><col /></colgroup>
        <thead>
          <tr>
            <HeadCell /><HeadCell scope="col">Name</HeadCell>
            <HeadCell scope="col">Date modified<SortMark><Chevron dir="down" color="#888" bold={1} /></SortMark></HeadCell>
            <HeadCell scope="col">Type</HeadCell><HeadCell scope="col">Size</HeadCell><HeadCell />
          </tr>
        </thead>
        <tbody>
          <Spacer $h={2}><td colSpan={6} /></Spacer>
          <tr><GroupHead colSpan={6}><GroupToggle><Chevron dir="down" w={11} bold={1} />Today (4)</GroupToggle></GroupHead></tr>
          {today.map((f, i) => <FileRow key={f[0]} file={f} on={i === 3} icon={i === 3 ? <RarIcon /> : <PageIcon />} />)}
        </tbody>
        <tbody>
          <Spacer $h={1}><td colSpan={6} /></Spacer>
          <tr><GroupHead colSpan={6}><GroupToggle><Chevron dir="down" w={11} bold={1} />A long time ago (5)</GroupToggle></GroupHead></tr>
          {older.map(f => <FileRow key={f[0]} file={f} icon={<ImagePageIcon />} />)}
        </tbody>
      </Files>
    </Body>
    <StatusBar>
      <span>9 items</span><span>1 item selected</span><span>20.0 MB</span>
      <ViewButtons>
        <ViewButton $on aria-label="Details"><Svg><path d="M.500 2.500h3v11h-3zM.500 6h3M.500 10h3" fill="#fff" stroke="#777" /><path d="M5 4.500h4M10 4.500h6M5 8.500h4M10 8.500h6M5 12.500h4M10 12.500h6" stroke="#555" /></Svg></ViewButton>
        <ViewButton aria-label="Large icons"><Svg s={14}><path d="M.500 2.500h15v11H.500z" fill="#fff" stroke="#888" /><path d="M2 4h12v4H2z" fill="#9ec0ee" /><path d="M2 8l6 1 6 0v3H2z" fill="#266070" /></Svg></ViewButton>
      </ViewButtons>
    </StatusBar>
  </Window>
);

export default function App() {
  return (
    <Screen>
      <Global />
      <Desktop>
        <DesktopIconBox $x={0} $y={10}><BinArt /></DesktopIconBox>
        <DesktopIconBox $x={75} $y={10}><TextArt /></DesktopIconBox>
        <DesktopIconBox $x={148} $y={9}><WordArt /></DesktopIconBox>
        <ClippedLabel>f</ClippedLabel>
        <DesktopIconBox $x={0} $y={601}><VlcArt />VLC media player</DesktopIconBox>
        <DesktopIconBox $x={74} $y={601}><WordArt />onlinefoun...</DesktopIconBox>
        <Watermark><span>ANY</span><PlayLogo /><span>RUN</span></Watermark>
        <BuildInfo>Test Mode<br />Windows 10 Pro<br />Build 19041.vb_release.191206-1406</BuildInfo>
        <Explorer />
        <Menu role="menu">
          {menu.map((m, i) => m
            ? <MenuItem key={i} role="menuitem" $bold={m.bold}><span>{m.icon}</span>{m.text}{m.sub && <SubmenuMark />}</MenuItem>
            : <hr key={i} />)}
        </Menu>
      </Desktop>
      <Taskbar>
        <StartButton aria-label="Start"><WindowsLogo /></StartButton>
        <TaskSearch>
          <Svg><circle cx="10" cy="6" r="5" stroke="#222" strokeWidth="1.200" /><path d="M6.500 9.500L.500 15.500" stroke="#222" strokeWidth="1.200" /></Svg>
          <input placeholder="Type here to search" aria-label="Type here to search" />
          <Puzzle />
        </TaskSearch>
        <TaskButton aria-label="Task View"><TaskViewIcon /></TaskButton>
        <TaskButton $open aria-label="Microsoft Edge"><EdgeIcon /></TaskButton>
        <TaskButton $open $active aria-label="File Explorer"><ExplorerIcon /></TaskButton>
        <TaskButton aria-label="Firefox"><FirefoxIcon /></TaskButton>
        <Tray>
          <button aria-label="Show hidden icons"><Chevron dir="up" w={16} color="#fff" bold={0.9} /></button>
          <button aria-label="Meet Now"><CamIcon /></button>
          <button aria-label="Volume"><VolumeIcon /></button>
          <button aria-label="Network"><NetIcon /></button>
          <Clock>6:22 PM<br />4/17/2026</Clock>
          <Notices aria-label="Notifications"><Svg><path d="M.500 1.500h15v11h-5L8 15l-2.500-2.500h-5z" stroke="#fff" /></Svg></Notices>
          <ShowDesktop aria-label="Show desktop" />
        </Tray>
      </Taskbar>
    </Screen>
  );
}
